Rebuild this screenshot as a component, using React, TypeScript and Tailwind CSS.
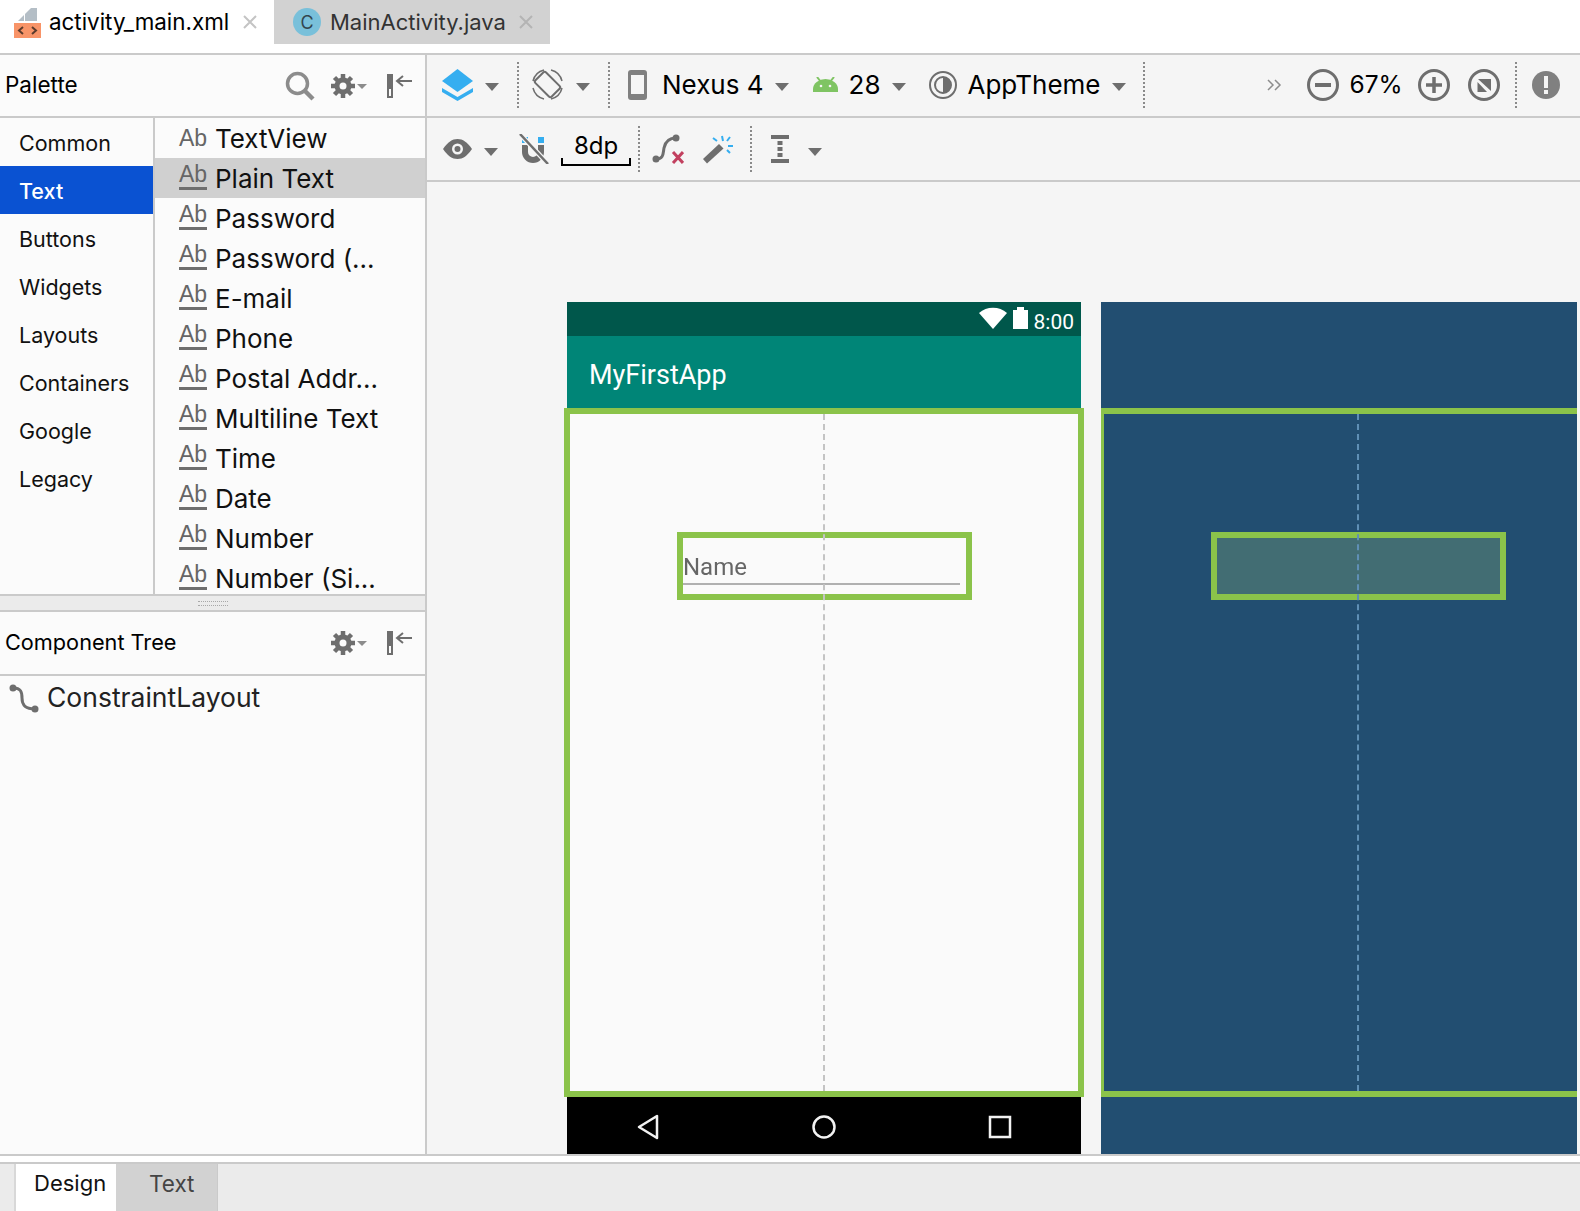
import React from 'react'

const categories = ['Common', 'Text', 'Buttons', 'Widgets', 'Layouts', 'Containers', 'Google', 'Legacy']
const items = ['TextView', 'Plain Text', 'Password', 'Password (...', 'E-mail', 'Phone', 'Postal Addr...', 'Multiline Text', 'Time', 'Date', 'Number', 'Number (Si...']

function Caret({ className = '' }: { className?: string }) {
  return (
    <svg width="14" height="8" viewBox="0 0 14 8" className={`mt-[5px] shrink-0 ${className}`}>
      <path d="M0 0h14L7 8z" fill="#6e6e6e" />
    </svg>
  )
}

function Dots({ className = '' }: { className?: string }) {
  return <div className={`h-[46px] w-0 shrink-0 border-l-2 border-dotted border-[#8a8a8a] ${className}`} />
}

function CloseX({ color = '#c4c4c4' }: { color?: string }) {
  return (
    <svg width="16" height="16" viewBox="0 0 16 16" className="shrink-0">
      <path d="M2 2l12 12M14 2L2 14" stroke={color} strokeWidth="2" />
    </svg>
  )
}

function Gear() {
  return (
    <svg width="36" height="26" viewBox="0 0 36 26" className="shrink-0">
      <g fill="#6e6e6e">
        <circle cx="12" cy="13" r="8.500" />
        <g stroke="#6e6e6e" strokeWidth="4.500">
          <path d="M12 1v24M0 13h24M3.500 4.500l17 17M20.500 4.500l-17 17" />
        </g>
      </g>
      <circle cx="12" cy="13" r="3.500" fill="#fbfbfb" />
      <path d="M26 11h10l-5 5z" fill="#8c8c8c" />
    </svg>
  )
}

function Collapse() {
  return (
    <svg width="25" height="26" viewBox="0 0 25 26" className="shrink-0">
      <path d="M0 1h6v24H0z" fill="#6e6e6e" />
      <path d="M2 16h2v7H2z" fill="#fbfbfb" />
      <path d="M25 8H11M16 3l-6 5 6 5" fill="none" stroke="#6e6e6e" strokeWidth="2" />
    </svg>
  )
}

function PanelHeader({ title, search, className }: { title: string; search?: boolean; className: string }) {
  return (
    <div className={`flex items-center border-b-2 border-[#cacaca] pl-[5px] ${className}`}>
      <span className="pb-[2px] text-black">{title}</span>
      <div className="ml-auto flex items-center pr-[13px]">
        {search && (
          <svg width="30" height="30" viewBox="0 0 30 30" className="mr-[16px]">
            <circle cx="12.500" cy="12.500" r="10" fill="none" stroke="#8c8c8c" strokeWidth="3.500" />
            <path d="M20 20l8 8" stroke="#8c8c8c" strokeWidth="4.500" />
          </svg>
        )}
        <Gear />
        <div className="w-[20px]" />
        <Collapse />
      </div>
    </div>
  )
}

function Ab({ underline }: { underline: boolean }) {
  return (
    <div className={`flex w-[28px] shrink-0 flex-col items-center ${underline ? 'mb-[2px]' : ''}`}>
      <span className="font-['Liberation_Sans',sans-serif] text-[23px] leading-[21px] text-[#666]">Ab</span>
      {underline && <div className="mt-[2px] h-[3px] w-full bg-[#6e6e6e]" />}
    </div>
  )
}

function Palette() {
  return (
    <div className="flex h-[478px] border-b-2 border-[#cacaca]">
      <div className="w-[155px] shrink-0 border-r-2 border-[#cacaca]">
        {categories.map(c => (
          <div
            key={c}
            className={`flex h-[48px] items-center pl-[19px] pt-[3px] text-[21.500px] ${c === 'Text' ? 'bg-[#0a52d2] font-medium text-white' : 'text-[#111]'}`}
          >
            {c}
          </div>
        ))}
      </div>
      <div className="min-w-0 flex-1 overflow-hidden">
        {items.map((item, i) => (
          <div
            key={item}
            className={`flex h-[40px] items-center gap-[8px] pl-[24px] text-[26px] text-[#111] ${item === 'Plain Text' ? 'bg-[#d0d0d0]' : ''}`}
          >
            <Ab underline={i > 0} />
            <span className="whitespace-nowrap">{item}</span>
          </div>
        ))}
      </div>
    </div>
  )
}

function Sidebar() {
  return (
    <div className="flex w-[427px] shrink-0 flex-col border-r-2 border-[#cacaca] bg-[#fbfbfb]">
      <PanelHeader title="Palette" search className="h-[63px] text-[22.500px]" />
      <Palette />
      <div className="flex h-[16px] items-center justify-center border-b-2 border-[#cacaca] bg-[#ebebeb]">
        <div className="h-[5px] w-[30px] border-y border-dotted border-[#a8a8a8]" />
      </div>
      <PanelHeader title="Component Tree" className="h-[64px] text-[21.700px]" />
      <div className="flex h-[44px] items-center pl-[9px] text-[26.500px] text-[#222]">
        <svg width="30" height="30" viewBox="0 0 30 30" className="mr-[8px] shrink-0">
          <circle cx="4" cy="5" r="3.500" fill="#6e6e6e" />
          <circle cx="26" cy="26" r="3.500" fill="#6e6e6e" />
          <path d="M4 5c8 0 9 4 9 10s2 11 13 11" fill="none" stroke="#6e6e6e" strokeWidth="3" />
        </svg>
        ConstraintLayout
      </div>
    </div>
  )
}

function RoundBtn({ children }: { children: React.ReactNode }) {
  return (
    <svg width="32" height="32" viewBox="0 0 32 32" className="shrink-0">
      <circle cx="16" cy="16" r="14.500" fill="none" stroke="#6e6e6e" strokeWidth="3" />
      {children}
    </svg>
  )
}

function TopToolbar() {
  return (
    <div className="flex h-[63px] items-center whitespace-nowrap border-b-2 border-[#cacaca] pb-[2px] pl-[14px] text-[26px] text-black">
      <svg width="33" height="33" viewBox="0 0 33 33" className="shrink-0">
        <path d="M16.500 1L32 13 16.500 24 1 13z" fill="#35aef0" />
        <path d="M1 20l15.500 9L32 20v4L16.500 33 1 24z" fill="#35aef0" />
      </svg>
      <Caret className="ml-[11px]" />
      <Dots className="ml-[18px]" />
      <svg width="33" height="33" viewBox="0 0 33 33" className="ml-[12px] shrink-0">
        <rect x="9" y="5" width="15" height="23" rx="2" transform="rotate(-45 16.500 16.500)" fill="none" stroke="#6e6e6e" strokeWidth="2" />
        <path d="M2 13A15 15 0 0 1 13 2M20 2a15 15 0 0 1 11 11M31 20a15 15 0 0 1-11 11M13 31A15 15 0 0 1 2 20" fill="none" stroke="#6e6e6e" strokeWidth="1.500" />
      </svg>
      <Caret className="ml-[12px]" />
      <Dots className="ml-[18px]" />
      <svg width="19" height="30" viewBox="0 0 19 30" className="ml-[18px] shrink-0">
        <rect width="19" height="30" rx="3" fill="#808080" />
        <rect x="3" y="5" width="13" height="19" fill="#f5f5f5" />
      </svg>
      <span className="ml-[15px]">Nexus 4</span>
      <Caret className="ml-[11px]" />
      <svg width="25" height="15" viewBox="0 0 25 15" className="ml-[24px] shrink-0">
        <path d="M0 15V12A12.500 10 0 0 1 25 12v3z" fill="#7fc463" />
        <path d="M4 0l4 5M21 0l-4 5" stroke="#7fc463" strokeWidth="2" />
        <circle cx="8" cy="9" r="1.300" fill="#f5f5f5" />
        <circle cx="17" cy="9" r="1.300" fill="#f5f5f5" />
      </svg>
      <span className="ml-[11px]">28</span>
      <Caret className="ml-[11px]" />
      <svg width="28" height="28" viewBox="0 0 28 28" className="ml-[23px] shrink-0">
        <circle cx="14" cy="14" r="13" fill="none" stroke="#6e6e6e" strokeWidth="2" />
        <circle cx="14" cy="14" r="8" fill="none" stroke="#6e6e6e" strokeWidth="2" />
        <path d="M14 6a8 8 0 0 1 0 16z" fill="#6e6e6e" />
      </svg>
      <span className="ml-[11px]">AppTheme</span>
      <Caret className="ml-[11px]" />
      <Dots className="ml-[17px]" />
      <svg width="16" height="12" viewBox="0 0 16 12" className="ml-[121px] shrink-0">
        <path d="M2 1l5 5-5 5M9 1l5 5-5 5" fill="none" stroke="#8c8c8c" strokeWidth="1.500" />
      </svg>
      <div className="ml-[25px] shrink-0">
        <RoundBtn>
          <path d="M8 16h16" stroke="#6e6e6e" strokeWidth="4" />
        </RoundBtn>
      </div>
      <span className="ml-[11px] text-[24.500px]">67%</span>
      <div className="ml-[15px] shrink-0">
        <RoundBtn>
          <path d="M8 16h16M16 8v16" stroke="#6e6e6e" strokeWidth="3.500" />
        </RoundBtn>
      </div>
      <div className="ml-[18px] shrink-0">
        <RoundBtn>
          <path d="M10 10h13v12z" fill="#6e6e6e" />
          <path d="M9.500 13l9.500 10H9.500z" fill="#6e6e6e" />
        </RoundBtn>
      </div>
      <Dots className="ml-[15px]" />
      <svg width="28" height="28" viewBox="0 0 28 28" className="ml-[15px] shrink-0">
        <circle cx="14" cy="14" r="14" fill="#808080" />
        <path d="M12 5h4v12h-4zM12 19h4v4h-4z" fill="#f5f5f5" />
      </svg>
    </div>
  )
}

function SecondToolbar() {
  return (
    <div className="flex h-[64px] items-center whitespace-nowrap border-b-2 border-[#cacaca] pl-[16px] text-[24px] text-black">
      <svg width="29" height="20" viewBox="0 0 29 20" className="shrink-0">
        <path d="M0 10C5 3 9 0 14.500 0S24 3 29 10c-5 7-9 10-14.500 10S5 17 0 10z" fill="#6e6e6e" />
        <circle cx="14.500" cy="10" r="5.500" fill="#f5f5f5" />
        <circle cx="14.500" cy="10" r="3" fill="#6e6e6e" />
      </svg>
      <Caret className="ml-[12px]" />
      <svg width="30" height="30" viewBox="0 0 30 30" className="ml-[21px] shrink-0">
        <path d="M3 11v7a11 11 0 0 0 22 0v-7h-6v7a5 5 0 0 1-10 0v-7z" fill="#6e6e6e" />
        <path d="M19 3h6v6h-6zM3 3h6v6H3z" fill="#35aef0" />
        <path d="M1 0l28 30" stroke="#f5f5f5" strokeWidth="5" />
        <path d="M1 0l28 30" stroke="#6e6e6e" strokeWidth="2.500" />
      </svg>
      <div className="ml-[12px] flex w-[70px] shrink-0 flex-col items-center">
        <span className="-mb-[2px] leading-[28px]">8dp</span>
        <div className="h-[8px] w-full border-x-2 border-b-2 border-black" />
      </div>
      <Dots className="ml-[7px]" />
      <svg width="32" height="30" viewBox="0 0 32 30" className="ml-[12px] shrink-0">
        <circle cx="4" cy="25" r="3.500" fill="#6e6e6e" />
        <circle cx="24" cy="4" r="3.500" fill="#6e6e6e" />
        <path d="M4 25c8 0 7-6 8-11s4-10 12-10" fill="none" stroke="#6e6e6e" strokeWidth="3" />
        <path d="M21 18l10 11M31 18L21 29" stroke="#c2405f" strokeWidth="3" />
      </svg>
      <svg width="32" height="30" viewBox="0 0 32 30" className="ml-[18px] shrink-0">
        <path d="M1 25L17 10l4.500 4.500L5 29.500z" fill="#6e6e6e" />
        <path d="M20 2l1 5M28 3l-3 4M31 12h-5M11 4l4 3M28 19l-3-3" stroke="#35aef0" strokeWidth="2" />
      </svg>
      <Dots className="ml-[16px]" />
      <svg width="18" height="28" viewBox="0 0 18 28" className="ml-[19px] shrink-0">
        <path d="M0 0h18v4H0zM0 24h18v4H0zM6.500 6h5v4h-5zM6.500 12h5v4h-5zM6.500 18h5v4h-5z" fill="#6e6e6e" />
      </svg>
      <Caret className="ml-[19px]" />
    </div>
  )
}

function LightPhone() {
  return (
    <div className="flex w-[514px] shrink-0 flex-col">
      <div className="flex h-[34px] items-center justify-end gap-[6px] bg-[#00574b] pr-[7px] font-['Roboto',sans-serif] text-[21px] text-white">
        <svg width="28" height="22" viewBox="0 0 28 22" className="-mt-[3px]">
          <path d="M0 6a21 21 0 0 1 28 0L14 22z" fill="#fff" />
        </svg>
        <svg width="15" height="22" viewBox="0 0 15 22" className="-mt-[3px]">
          <path d="M0 3h4V0h7v3h4v19H0z" fill="#fff" />
        </svg>
        <span className="pt-[8px]">8:00</span>
      </div>
      <div className="flex h-[72px] items-center bg-[#008577] pl-[22px] pt-[6px] font-['Roboto',sans-serif] text-[27px] text-white">MyFirstApp</div>
      <div className="relative -mx-[3px] h-[689px] border-[6px] border-[#8bc34a] bg-[#fafafa]">
        <div className="relative ml-[107px] mt-[118px] h-[68px] w-[295px] border-[6px] border-[#8bc34a]">
          <div className="mt-[15px] font-['Roboto',sans-serif] text-[24px] leading-[28px] text-[#666] blur-[0.5px]">Name</div>
          <div className="mr-[6px] mt-[2px] h-[2px] bg-[#b0b0b0]" />
        </div>
        <div className="absolute bottom-0 left-[253px] top-0 border-l-2 border-dashed border-[#c4c4c4]" />
      </div>
      <div className="flex flex-1 items-center justify-between bg-black px-[69px] pt-[2px]">
        <svg width="24" height="26" viewBox="0 0 24 26">
          <path d="M21 2v22L3 13z" fill="none" stroke="#f2f2f2" strokeWidth="2.500" strokeLinejoin="round" />
        </svg>
        <svg width="26" height="26" viewBox="0 0 26 26">
          <circle cx="13" cy="13" r="10.500" fill="none" stroke="#f2f2f2" strokeWidth="2.500" />
        </svg>
        <svg width="24" height="24" viewBox="0 0 24 24">
          <rect x="2" y="2" width="20" height="20" fill="none" stroke="#f2f2f2" strokeWidth="2.500" />
        </svg>
      </div>
    </div>
  )
}

function Blueprint() {
  return (
    <div className="flex min-w-0 flex-1 flex-col overflow-hidden bg-[#224e71]">
      <div className="h-[106px] shrink-0" />
      <div className="relative -ml-[3px] h-[689px] shrink-0 border-y-[6px] border-l-[6px] border-[#8bc34a]">
        <div className="relative ml-[107px] mt-[118px] h-[68px] w-[295px] border-[6px] border-[#8bc34a] bg-[#426d73]" />
        <div className="absolute bottom-0 left-[253px] top-0 border-l-2 border-dashed border-[#5f8fb5]" />
      </div>
    </div>
  )
}

function Tabs() {
  return (
    <div className="flex h-[55px] border-b-2 border-[#cacaca] bg-white">
      <div className="flex h-[44px] w-[274px] items-center pl-[14px] text-[22.400px] text-black">
        <svg width="27" height="31" viewBox="0 0 27 31" className="mr-[8px] shrink-0">
          <path d="M4 14L10 8v6z" fill="#b4bec6" />
          <path d="M11 14V7l6-6h6v13z" fill="#b4bec6" />
          <path d="M0 16h27v15H0z" fill="#f89468" />
          <path d="M9 20l-4 3.500 4 3.500M18 20l4 3.500-4 3.500" fill="none" stroke="#5b3b2c" strokeWidth="2" />
        </svg>
        <span>activity_main.xml</span>
        <div className="ml-[13px]">
          <CloseX />
        </div>
      </div>
      <div className="flex h-[44px] w-[276px] items-center bg-[#d2d2d2] pl-[19px] text-[22px] text-[#333]">
        <div className="mr-[9px] flex h-[28px] w-[28px] shrink-0 items-center justify-center rounded-full bg-[#79c0da] text-[18px] text-[#33464f]">C</div>
        <span>MainActivity.java</span>
        <div className="ml-[12px]">
          <CloseX color="#b4b4b4" />
        </div>
      </div>
    </div>
  )
}

export default function App() {
  return (
    <div className="flex h-[1211px] w-[1580px] flex-col overflow-hidden bg-white font-['Inter',sans-serif]">
      <Tabs />
      <div className="flex h-[1099px] min-h-0">
        <Sidebar />
        <div className="flex min-w-0 flex-1 flex-col bg-[#f5f5f5]">
          <TopToolbar />
          <SecondToolbar />
          <div className="flex flex-1 gap-[20px] overflow-hidden pl-[140px] pt-[120px] pr-[3px]">
            <LightPhone />
            <Blueprint />
          </div>
        </div>
      </div>
      <div className="h-[8px] border-t-2 border-[#cacaca] bg-white" />
      <div className="flex flex-1 border-t-2 border-[#cacaca] bg-[#ebebeb]">
        <div className="ml-[14px] flex w-[102px] items-center border-l-2 border-[#d8d8d8] bg-white pb-[8px] pl-[18px] text-[22px] text-[#111]">Design</div>
        <div className="flex w-[102px] items-center border-r border-[#cacaca] bg-[#d2d2d2] pb-[8px] pl-[33px] text-[22.500px] text-[#444]">Text</div>
      </div>
    </div>
  )
}
